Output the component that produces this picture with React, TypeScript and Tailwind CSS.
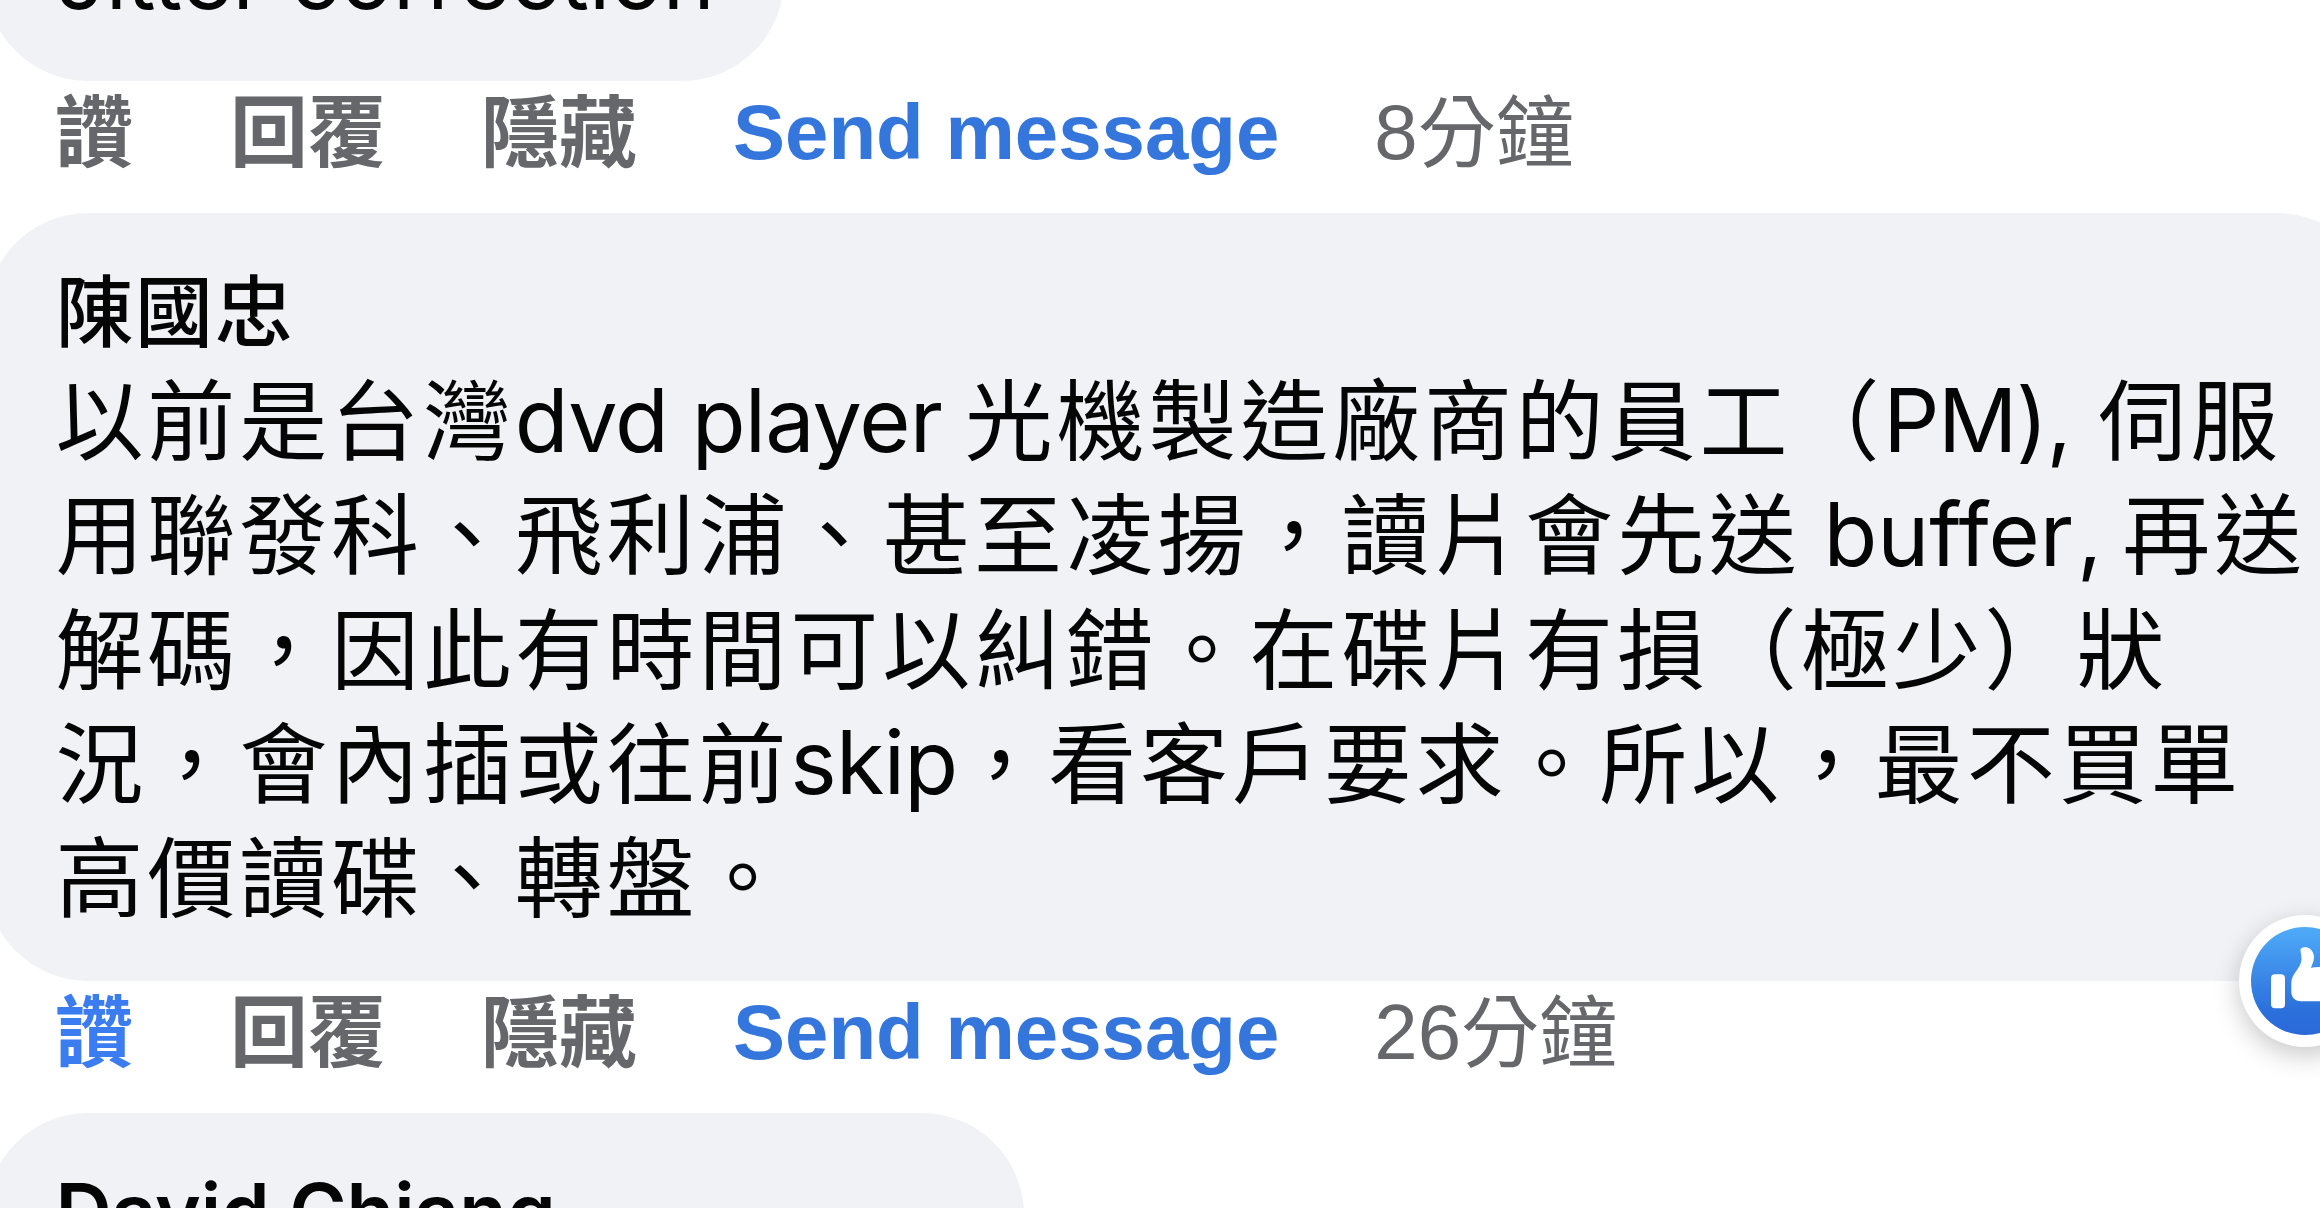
import type { ReactNode } from "react";
import clsx from "clsx";

function Bubble({ className, children }: { className?: string; children: ReactNode }) {
  return (
    <div className={clsx("relative -ml-[14px] shrink-0 rounded-[102px] bg-[#f0f2f6] pl-[69.5px]", className)}>
      {children}
    </div>
  );
}

function Name({ className, children }: { className?: string; children: ReactNode }) {
  return (
    <div className={clsx("text-[78px] leading-[102px] whitespace-nowrap text-[#050505]", className)}>
      {children}
    </div>
  );
}

// Latin run inside a Chinese line, lifted slightly so both scripts sit level
function Latin({ className, children }: { className: string; children: ReactNode }) {
  return (
    <span
      className={clsx(
        "inline-block align-[1.5px] leading-none whitespace-pre [font-variant-ligatures:none]",
        className,
      )}
    >
      {children}
    </span>
  );
}

function Actions({ count, liked }: { count: number; liked?: boolean }) {
  return (
    <div className="flex h-[132px] shrink-0 gap-[95px] pt-[12px] pl-[55px] font-['Liberation_Sans','Noto_Sans_CJK_TC',sans-serif] text-[78px] leading-[78px] font-bold whitespace-nowrap text-[#65676b]">
      <span className={clsx("pt-[2px]", liked && "text-[#3b7df0]")}>讚</span>
      <span className="ml-[2px] pt-[2px]">回覆</span>
      <span className="pt-[2px]">隱藏</span>
      <span className="ml-[1px] text-[#3576dd]">Send message</span>
      <span className="flex font-normal">
        {count}
        <span className="pt-[2px]">分鐘</span>
      </span>
    </div>
  );
}

function LikeBadge() {
  return (
    <div className="absolute -bottom-[66px] left-[2253px] size-[132px] rounded-full bg-white shadow-[0_8px_26px_rgba(0,0,0,0.22)]">
      <svg viewBox="0 0 132 132" className="size-full">
        <defs>
          <linearGradient id="like" x1="0" y1="0" x2="0" y2="1">
            <stop offset="0" stopColor="#4facf8" />
            <stop offset="0.75" stopColor="#2c71dc" />
            <stop offset="1" stopColor="#2a69d8" />
          </linearGradient>
        </defs>
        <circle cx="66" cy="66" r="54" fill="url(#like)" />
        <rect x="32" y="59.3" width="14" height="34" rx="4" fill="#fff" />
        <path
          fill="#fff"
          d="M52.3 68C52.3 58 62.5 53 62.5 44C62.5 39 61 36.5 61.7 34C62.5 32.6 65 32 67.5 32.3C72 33 75 37.5 75 42.5C75 46.5 73 49 72 53C75 52.3 80 52 84 52H93C101 52 102 60 97 62C100 66 99 70 95 72C97 76 95 79 91 80C92 84 89 86.3 84 86.3H62C56 86.3 52.3 82 52.3 77Z"
        />
      </svg>
    </div>
  );
}

export default function App() {
  return (
    <div className="flex h-[1208px] w-[2320px] flex-col overflow-hidden bg-white font-['Inter','Noto_Sans_CJK_TC',sans-serif]">
      <Bubble className="-mt-[187px] h-[268px] w-[798px] pt-[107px]">
        <p className="text-[88px] leading-[114.3px] tracking-[-0.1px] whitespace-nowrap text-[#050505]">
          Jitter correction
        </p>
      </Bubble>
      <Actions count={8} />
      <Bubble className="h-[768px] w-[2393px] pt-[49px]">
        <Name className="font-medium tracking-[1.6px]">陳國忠</Name>
        <div className="text-[88px] leading-[114.3px] tracking-[3.85px] whitespace-nowrap text-[#050505]">
          <p>
            以前是台灣<Latin className="w-[450px] tracking-[-0.9px]">dvd player </Latin>
            光機製造廠商的員工（<Latin className="w-[215px] tracking-[-1.5px]">PM), </Latin>伺服
          </p>
          <p>
            用聯發科、飛利浦、甚至凌揚，讀片會先送
            <Latin className="-ml-[2px] w-[323.5px] tracking-[0px]">
              {" buffe"}
              <span className="tracking-[4px]">r</span>
              {", "}
            </Latin>
            再送
          </p>
          <p>解碼，因此有時間可以糾錯。在碟片有損（極少）狀</p>
          <p>
            況，會內插或往前<Latin className="w-[166px] tracking-[-0.7px]">skip</Latin>
            ，看客戶要求。所以，最不買單
          </p>
          <p>高價讀碟、轉盤。</p>
        </div>
        <LikeBadge />
      </Bubble>
      <Actions count={26} liked />
      <Bubble className="h-[420px] w-[1038px] pt-[48px]">
        <Name className="font-semibold tracking-[-0.1px]">David Chiang</Name>
      </Bubble>
    </div>
  );
}
